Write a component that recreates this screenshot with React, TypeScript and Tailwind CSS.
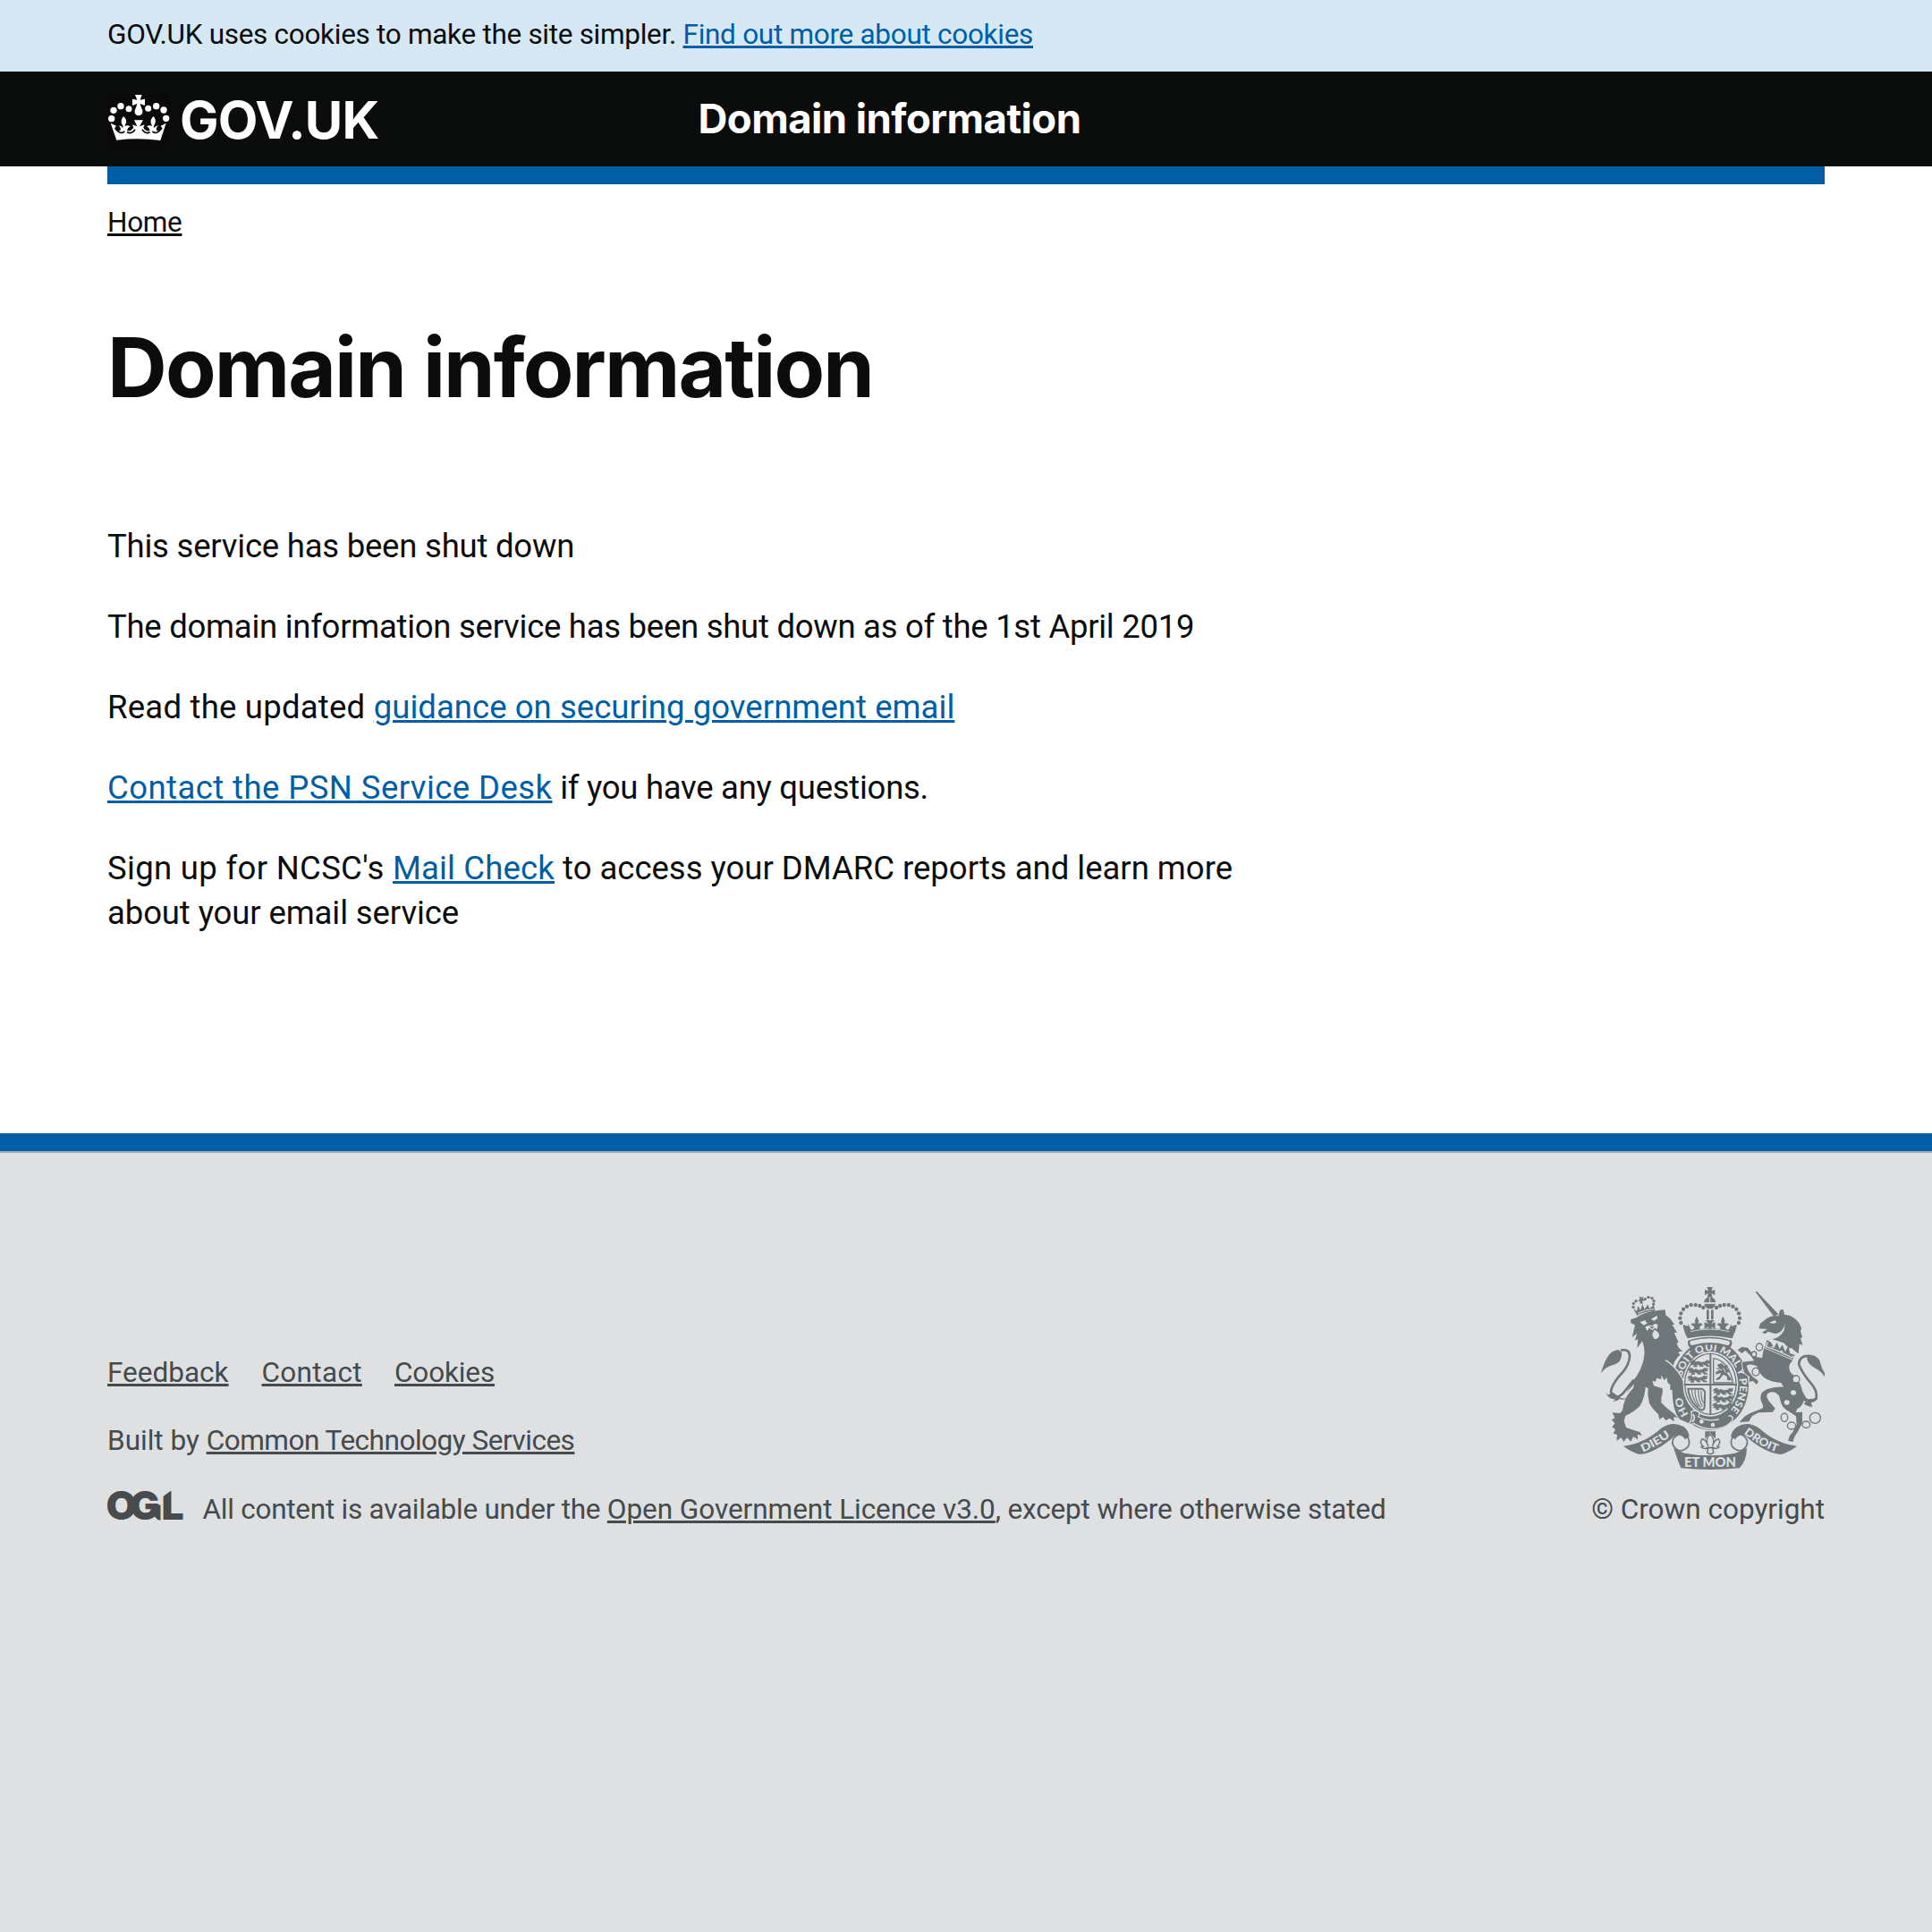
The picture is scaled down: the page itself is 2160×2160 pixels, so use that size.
import React from 'react';

const LINK = 'underline decoration-[3px] underline-offset-[2px]';

function Crown() {
  return (
    <svg viewBox="60 72 210 186" className="h-[62px] w-[70px] bg-[#0a0a0a]" fill="#fff">
      <circle cx="74" cy="158" r="11" />
      <circle cx="81" cy="130" r="11" />
      <circle cx="105" cy="116" r="11" />
      <circle cx="132" cy="125" r="10.5" />
      <circle cx="197" cy="124" r="10.5" />
      <circle cx="224" cy="116" r="11" />
      <circle cx="249" cy="129" r="11" />
      <circle cx="257" cy="157" r="11" />
      <path d="M153 78H176L170 95L186 92V114L170 108Q172 118 178 130Q180 147 165 148Q150 147 152 130Q158 118 160 108L144 114V92L160 95Z" />
      <path d="M71 173L90 182L84 191Q92 203 103 198Q108 190 98 181Q107 182 112 189Q114 182 108 175Q104 162 114 150Q126 160 123 172L118 184Q126 178 137 184Q128 188 126 198Q138 202 148 188L144 178L160 184L150 163H180L168 184L185 178L181 188Q190 203 203 198Q201 188 192 184Q203 178 210 184L206 172Q203 160 215 150Q225 162 220 175Q214 182 217 189Q222 182 231 181Q221 190 226 198Q237 203 245 191L239 182L257 173L238 231Q165 221 91 230Z" />
      <path d="M90 194Q103 212 118 201M126 203Q143 211 153 194M177 194Q187 211 203 203M211 201Q225 212 239 194" fill="none" stroke="#0a0a0a" strokeWidth="5" />
    </svg>
  );
}

function OglLogo() {
  return (
    <svg viewBox="0 0 82 34" className="h-[34px] w-[82px] overflow-visible" fill="#474b4d">
      <text x="-1.5 25 60.5" y="33" fontFamily="Inter" fontWeight="900" fontSize="44.5">OGL</text>
      <path d="M50 16.5H59.5V33.5H57L50 27Z" />
      <path d="M61 -1H72V0L61 8Z" fill="#dee0e2" />
    </svg>
  );
}

const ARCH_BEADS = [
  [328, 177], [325, 161], [328, 145], [336, 131], [348, 122], [362, 117], [377, 117], [391, 120], [403, 126],
];

function CrestCrown() {
  return (
    <g>
      <path d="M415 57H435L430 70L442 66V84L430 78L434 91H416L420 78L408 84V66L420 70Z" />
      <path d="M405 108Q408 91 425 90Q442 91 445 108ZM406 113H444Q440 130 425 130Q410 130 406 113Z" />
      <path d="M425 91V108" stroke="#dee0e2" strokeWidth="3" />
      {ARCH_BEADS.map(([x, y]) => (
        <g key={x * 1000 + y}>
          <circle cx={x} cy={y} r="6.5" />
          <circle cx={850 - x} cy={y} r="6.5" />
        </g>
      ))}
      <path d="M414 133H422V166H414ZM429 133H437V166H429Z" />
      <path d="M411 168H440L430 181L443 174V198L430 190L436 204H414L420 190L407 198V174L420 181Z" />
      <path d="M381 156Q391 171 385 180Q395 174 402 184Q392 184 390 195L400 203H362L373 195Q371 184 360 184Q368 174 377 180Q371 170 381 156Z" />
      <path d="M469 156Q459 171 465 180Q455 174 448 184Q458 184 460 195L450 203H488L477 195Q479 184 490 184Q482 174 473 180Q479 170 469 156Z" />
      <path d="M334 183L352 188V180L362 200L425 195L488 200L498 180V188L516 183Q512 205 500 229Q425 212 350 229Q340 212 334 183Z" />
      <path d="M360 206Q425 190 490 206" fill="none" stroke="#dee0e2" strokeWidth="2.5" />
      <path d="M352 236Q425 212 498 236Q502 254 490 262Q425 238 360 262Q348 252 352 236Z" />
      <path d="M360 238Q425 220 490 238Q496 250 484 252Q425 234 366 252Q354 250 360 238Z" fill="#dee0e2" />
    </g>
  );
}

function Shield() {
  return (
    <g>
      <ellipse cx="427" cy="387" rx="128" ry="149" />
      <path d="M299 395Q298 470 324 500L365 518V460L320 395Z" />
      <ellipse cx="427" cy="382" rx="93" ry="109" fill="#dee0e2" />
      <ellipse cx="427" cy="382" rx="86" ry="102" fill="none" stroke="#6f777b" strokeWidth="4" />
      <path d="M427 282V486M338 384H516" stroke="#6f777b" strokeWidth="6" />
      {/* three lions passant, upper left and lower right quarters */}
      {[[360, 300], [352, 326], [350, 352], [436, 394], [436, 419], [434, 444]].map(([x, y]) => (
        <path
          key={`${x}-${y}`}
          transform={`translate(${x} ${y})`}
          d="M4 4L14 2L16 9L26 6L36 10L48 8L56 2L60 4L54 8L66 3L64 13L52 13L60 19L66 23H54L48 17L38 16L44 23H32L28 17L20 17L22 24H10L14 17L2 18L8 12L0 10Z"
          stroke="#6f777b"
          strokeWidth="2"
        />
      ))}
      {/* rampant lion */}
      <path d="M437 296V378H506M437 296Q488 304 502 374" fill="none" stroke="#6f777b" strokeWidth="4" />
      <path d="M448 318L464 312L474 322L486 318L480 330L492 338L482 346L494 360L498 370H484L482 356L470 350L458 366L446 370L448 362L458 356L462 344L446 350L444 342L456 336L446 330L456 326Z" />
      <path d="M452 330L466 336M470 328L478 344" stroke="#dee0e2" strokeWidth="3" />
      {/* harp */}
      <path d="M352 398H398Q412 404 408 420L407 462Q400 476 388 465Q362 446 354 412Z" fill="none" stroke="#6f777b" strokeWidth="6" />
      <path d="M364 402Q366 432 386 458M375 402Q374 434 394 462M386 402Q386 434 400 458M396 404Q394 430 404 446" fill="none" stroke="#6f777b" strokeWidth="3.5" />
      {/* garter lettering */}
      <path id="garter-left" d="M354 484Q333 454 328 408" fill="none" />
      <path id="garter-top" d="M332 357A98 115 0 1 1 480 482" fill="none" />
      <g fill="#dee0e2" fontFamily="Lato" fontWeight="900" fontSize="34">
        <text><textPath href="#garter-left" textLength="64" lengthAdjust="spacingAndGlyphs">HO</textPath></text>
        <text><textPath href="#garter-top" textLength="398" lengthAdjust="spacingAndGlyphs">SOIT QUI MAL Y PENSE</textPath></text>
      </g>
      {/* buckle and strap */}
      <path d="M362 475Q380 465 391 480L386 492Q425 512 466 497L494 488Q515 500 480 522Q454 535 425 532Q398 532 372 515L352 519Q370 500 362 475Z" stroke="#dee0e2" strokeWidth="4" />
      <path d="M452 496Q460 484 474 474L492 496Q478 506 462 508Z" />
      <path d="M368 483Q379 494 366 510" fill="none" stroke="#dee0e2" strokeWidth="5" />
      <circle cx="397" cy="508" r="7" fill="#dee0e2" />
      <circle cx="435" cy="519" r="7" fill="#dee0e2" />
    </g>
  );
}

function Lion() {
  return (
    <g>
      {/* crown */}
      <path d="M188 88L196 92L203 88L200 97L208 100L199 104L200 113L190 112L191 104L183 103L190 97Z" />
      {[[168, 124], [169, 112], [177, 104], [208, 97], [219, 91], [231, 94], [237, 103], [236, 114]].map(([x, y]) => (
        <circle key={x} cx={x} cy={y} r="5" />
      ))}
      <path d="M167 128L180 138L184 120L192 134L199 114L206 131L217 115L222 129L237 118L241 137Q208 137 181 152Z" />
      <path d="M183 145Q208 131 237 131" fill="none" stroke="#dee0e2" strokeWidth="3" />
      {/* head, mane and body */}
      <path d="M160 165L178 160Q205 138 275 133L277 151L292 163L307 184L298 182L315 210L305 209L320 243L314 244Q316 262 334 271L318 276L325 284Q306 300 302 322Q322 345 333 375L336 405L323 399L325 413L311 404L309 413L300 402L292 402L292 384L284 378L280 360L272 370L262 352L262 366L246 362L243 374L232 371L237 388L266 397Q268 412 262 427L262 444Q278 464 303 480L318 496L304 492L305 508L290 497L277 504L268 493L256 501L252 484Q232 466 222 447L217 418L218 396L209 392Q206 430 190 456Q168 478 142 488L137 506L144 528L170 537L190 543L197 556L182 551L184 568L168 559L160 575L147 562L136 576L128 562L112 572L114 552L101 548L108 534L97 526L106 514L96 502L106 496L98 478L122 480Q134 474 135 452Q143 420 168 396L171 382L145 411L170 368Q200 330 205 285Q208 262 198 238L181 262L184 232L174 236L180 212L164 226L170 200L174 184L160 178Z" />
      <path d="M276 302Q320 330 336 372" fill="none" stroke="#dee0e2" strokeWidth="4" />
      {/* face */}
      <path d="M190 175L207 168L215 178L204 185ZM228 164L247 153L250 161L238 170ZM208 190L222 185L232 187L240 180L250 182L248 198L240 194L232 202L222 194L214 204Z" fill="#dee0e2" />
      <path d="M239 200Q255 206 255 220Q250 235 238 230Q228 218 235 208Z" fill="#dee0e2" />
      <path d="M221 190L238 189L232 197Z" />
      {/* tail */}
      <path d="M126 269Q157 262 156 291Q153 324 121 355Q86 398 95 419Q108 437 133 414L170 368" fill="none" stroke="#6f777b" strokeWidth="8" />
      <path d="M60 346Q66 320 80 294Q92 270 119 267L129 276Q133 310 98 319Q76 324 60 346Z" />
      <path d="M76 412Q88 425 98 409L118 424Q132 436 150 427Q138 438 122 432Q115 440 99 440L109 434Q86 434 76 412Z" />
    </g>
  );
}

function Unicorn() {
  return (
    <g>
      <path d="M577 72L583 72L655 148L640 156Z" />
      <path d="M589 196L594 179L615 163Q628 152 655 153L660 134L671 131L675 149Q704 150 724 177L732 194L729 205L735 225L729 229L736 251L725 248L722 280L708 270L700 262L690 262L672 244L652 238L634 232Q660 228 674 202L677 180Q670 210 645 214L620 206L611 214L600 209L618 198Z" />
      <path d="M624 176L644 168L648 177L636 179Z" fill="#dee0e2" />
      {/* collar */}
      <path d="M616 234L630 242L640 260L650 242L659 265L668 250L678 274L688 254L694 280L710 284L703 301Q650 280 609 261Z" />
      <path d="M619 241L614 257Q655 270 701 294L706 288M632 256L640 259M662 271L670 273" fill="none" stroke="#dee0e2" strokeWidth="4" />
      {/* body and legs */}
      <path
        d="M606 262Q650 280 703 303Q682 320 697 345Q725 365 734 400L741 436Q733 461 718 465L713 477L735 476L735 513L720 542Q706 558 704 576L687 572L694 553L702 545L716 518L714 490L690 474Q667 462 662 440L658 423Q646 405 625 410Q608 418 622 438L644 464L636 476L588 478L566 490L556 508L524 510L541 491L560 480L600 464Q608 460 598 442Q586 410 620 398Q650 390 672 392L664 378Q610 374 594 346L582 322Q560 312 548 321L554 338L568 357L588 372L582 384L570 372L556 374L558 358L542 346Q532 322 534 308L574 304L562 287L544 270L532 279L518 268L532 258L552 260L576 290L600 295Z"
        stroke="#dee0e2"
        strokeWidth="5"
        paintOrder="stroke"
      />
      {/* tail */}
      <path d="M764 288Q722 285 724 318Q738 350 762 377Q790 410 780 432Q760 450 744 430L727 400" fill="none" stroke="#6f777b" strokeWidth="8" />
      <path d="M751 286Q784 280 795 308Q798 328 810 345V358Q798 338 775 327Q747 311 751 286Z" />
      <path d="M735 424Q746 436 762 432L788 430Q775 445 764 444L769 459Q748 456 740 447L748 442Q736 438 735 424Z" />
      {/* chain */}
      <g fill="#dee0e2">
        <ellipse cx="705" cy="411" rx="9" ry="8" />
        <ellipse cx="683" cy="444" rx="9" ry="8" />
      </g>
      <g fill="#dee0e2" stroke="#6f777b" strokeWidth="4">
        <ellipse cx="591" cy="258" rx="11" ry="12" />
        <ellipse cx="573" cy="282" rx="8" ry="9" />
        <ellipse cx="579" cy="341" rx="12" ry="13" />
        <ellipse cx="714" cy="366" rx="12" ry="12" />
      </g>
      <g fill="none" stroke="#6f777b" strokeWidth="4">
        <ellipse cx="675" cy="494" rx="11" ry="14" />
        <ellipse cx="699" cy="522" rx="14" ry="12" />
        <ellipse cx="748" cy="518" rx="13" ry="11" />
        <circle cx="778" cy="496" r="18" />
      </g>
    </g>
  );
}

function Ribbon() {
  return (
    <g>
      <path d="M135 590Q205 582 262 530Q300 504 338 526Q354 540 356 558L342 568Q330 548 308 556Q240 615 190 618Q160 610 135 590Z" />
      <path d="M717 590Q648 582 590 530Q552 504 516 526Q498 540 495 558L510 568Q522 548 544 556Q610 615 664 618Q692 610 717 590Z" />
      <path d="M346 556Q362 572 352 592Q334 610 318 604Q296 590 300 572Q306 556 322 552M506 556Q490 572 500 592Q518 610 534 604Q554 590 550 572Q544 556 530 552" fill="none" stroke="#6f777b" strokeWidth="5" />
      <path d="M303 596Q318 606 340 614Q425 630 510 614Q532 606 549 596Q548 640 524 664Q425 674 328 664Q318 640 303 596Z" />
      <path id="motto-left" d="M200 611Q252 590 302 549" fill="none" />
      <path id="motto-right" d="M538 547Q596 594 656 613" fill="none" />
      <g fill="#dee0e2" fontFamily="Lato" fontWeight="900">
        <text fontSize="37"><textPath href="#motto-left" textLength="108" lengthAdjust="spacingAndGlyphs">DIEU</textPath></text>
        <text fontSize="37"><textPath href="#motto-right" textLength="128" lengthAdjust="spacingAndGlyphs">DROIT</textPath></text>
        <text x="339" y="659" fontSize="43" textLength="174" lengthAdjust="spacingAndGlyphs">ET MON</text>
      </g>
      {/* fleur-de-lis */}
      <path d="M409 541H444V566L435 556L426 545L418 556L409 566Z" />
      <path d="M426 550Q444 568 434 590Q440 568 454 566Q464 580 450 591L456 594Q444 602 434 595L437 612Q426 622 416 612L419 595Q408 602 396 594L403 591Q388 580 399 566Q413 568 419 590Q408 568 426 550Z" fill="#dee0e2" stroke="#6f777b" strokeWidth="4.5" />
      <path d="M412 596H441" stroke="#6f777b" strokeWidth="5" />
    </g>
  );
}

function RoyalArms() {
  return (
    <svg viewBox="60 48 750 621" className="h-[207px] w-[250px] overflow-visible" fill="#6f777b">
      <Shield />
      <CrestCrown />
      <Lion />
      <Unicorn />
      <Ribbon />
    </svg>
  );
}

export default function App() {
  return (
    <div className="flex min-h-[2160px] flex-col bg-white font-['Roboto',sans-serif] text-[31.5px] leading-[41px] text-[#0b0c0c]">
      <div className="h-20 bg-[#d5e8f3] px-[120px] pt-[18px] whitespace-pre">
        <span className="tracking-[-0.294px]">GOV.UK uses cookies to make the site simpler. </span>
        <a className={`${LINK} tracking-[-0.287px] text-[#005ea5]`}>Find out more about cookies</a>
      </div>

      <header className="flex h-[106px] bg-[#0b0c0c] px-[120px] font-['Inter',sans-serif] font-bold text-white">
        <div className="flex w-[660.5px]">
          <div className="pt-[24px]">
            <Crown />
          </div>
          <div className="pt-[19px] pl-[11px] text-[58px] leading-[70px] tracking-[-0.8px]">GOV.UK</div>
        </div>
        <div className="text-[45.5px] leading-[105px] tracking-[-0.55px]">Domain information</div>
      </header>

      <main className="h-[1081px] px-[120px]">
        <div className="h-5 bg-[#005ea5]" />
        <nav className="pt-[22px]">
          <a className={`${LINK} tracking-[-0.33px]`}>Home</a>
        </nav>
        <h1 className="mt-[85px] font-['Inter',sans-serif] text-[92.5px] leading-[112px] font-bold tracking-[-1.9px]">
          Domain information
        </h1>
        <div className="mt-[119.5px] flex flex-col gap-10 text-[36.5px] leading-[50px] whitespace-pre">
          <p className="tracking-[-0.22px]">This service has been shut down</p>
          <p className="tracking-[-0.27px]">The domain information service has been shut down as of the 1st April 2019</p>
          <p>
            <span className="tracking-[0.23px]">Read the updated </span>
            <a className={`${LINK} tracking-[0.048px] text-[#005ea5]`}>guidance on securing government email</a>
          </p>
          <p>
            <a className={`${LINK} tracking-[0.432px] text-[#005ea5]`}>Contact the PSN Service Desk</a>
            <span className="tracking-[-0.27px]"> if you have any questions.</span>
          </p>
          <p>
            <span className="tracking-[0.32px]">Sign up for NCSC's </span>
            <a className={`${LINK} tracking-[0.165px] text-[#005ea5]`}>Mail Check</a>
            <span className="tracking-[-0.013px]"> to access your DMARC reports and learn more</span>
            <br />
            <span className="tracking-[-0.107px]">about your email service</span>
          </p>
        </div>
      </main>

      <footer className="flex-1 border-t-[20px] border-[#005ea5] bg-[#dee0e2] text-[#454a4c]">
        <div className="h-0.5 bg-[#a1acb2]" />
        <div className="flex items-end justify-between px-[120px] pt-[147px] whitespace-pre">
          <div className="flex flex-col">
            <div className="flex">
              <a className={`${LINK} w-[136px]`}>Feedback</a>
              <a className={`${LINK} ml-[36.5px] w-[112px] tracking-[0.32px]`}>Contact</a>
              <a className={`${LINK} ml-[36.5px] tracking-[-0.14px]`}>Cookies</a>
            </div>
            <div className="mt-[35px]">
              Built by <a className={`${LINK} tracking-[-0.48px]`}>Common Technology Services</a>
            </div>
            <div className="mt-9 flex">
              <div className="-mt-px w-[106.5px]">
                <OglLogo />
              </div>
              <p>
                <span className="tracking-[-0.25px]">All content is available under the </span>
                <a className={`${LINK} tracking-[-0.05px]`}>Open Government Licence v3.0</a>
                <span className="tracking-[-0.15px]">, except where otherwise stated</span>
              </p>
            </div>
          </div>
          <div className="flex flex-col items-end gap-6">
            <RoyalArms />
            <span>© Crown copyright</span>
          </div>
        </div>
      </footer>
    </div>
  );
}
